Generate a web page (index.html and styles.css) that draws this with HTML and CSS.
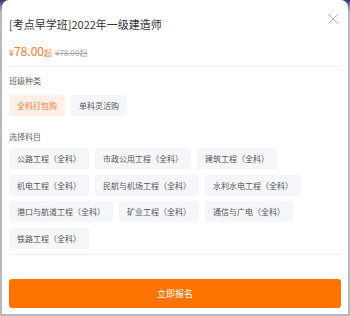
FILE: index.html
```html
<!DOCTYPE html>
<html lang="zh-CN">

<head>
    <meta charset="UTF-8">
    <meta name="viewport" content="width=device-width, initial-scale=1.0">
    <title>选择班级</title>
    <link rel="stylesheet" href="styles.css">
</head>

<body>
    <div class="modal">
        <div class="close">
            <svg width="10" height="10" viewBox="0 0 10 10">
                <path d="M0.5 0.5 L9.5 9.5 M9.5 0.5 L0.5 9.5" stroke="#b5b5b5" stroke-width="1" fill="none" />
            </svg>
        </div>

        <div class="head">
            <div class="title">[考点早学班]2022年一级建造师</div>
            <div class="price">
                <span class="yen">¥</span><span class="num">78.00</span><span class="qi">起</span><span class="old">¥78.00起</span>
            </div>
        </div>

        <div class="label first">班级种类</div>
        <div class="options">
            <span class="opt active">全科打包购</span>
            <span class="opt">单科灵活购</span>
        </div>

        <div class="label second">选择科目</div>
        <div class="options subjects">
            <span class="opt">公路工程（全科）</span>
            <span class="opt">市政公用工程（全科）</span>
            <span class="opt">建筑工程（全科）</span>
            <span class="opt">机电工程（全科）</span>
            <span class="opt">民航与机场工程（全科）</span>
            <span class="opt">水利水电工程（全科）</span>
            <span class="opt">港口与航道工程（全科）</span>
            <span class="opt">矿业工程（全科）</span>
            <span class="opt">通信与广电（全科）</span>
            <span class="opt">铁路工程（全科）</span>
        </div>

        <div class="footer">
            <button class="submit">立即报名</button>
        </div>
    </div>
</body>
</html>
```

FILE: styles.css
```css
body {
    margin: 0;
    height: 316px;
    overflow: hidden;
    background: linear-gradient(to bottom, #33337a 0, #7c7ca8 6px, #b9b9b9 12px);
    font-family: "Noto Sans CJK SC", "Noto Sans", sans-serif;
}

.modal {
    position: relative;
    box-sizing: border-box;
    height: 314px;
    margin: 0 2px;
    padding: 0 7px;
    background-color: #fff;
    border-radius: 7px 7px 0 0;
}

.close {
    position: absolute;
    top: 14px;
    right: 10px;
    width: 10px;
    height: 10px;
    line-height: 0;
}

.head {
    padding: 17px 0 10px;
    border-bottom: 1px solid #f2f2f2;
}

.title {
    font-size: 11px;
    line-height: 15px;
    color: #333;
}

.price {
    margin-top: 10px;
    height: 14px;
    line-height: 14px;
    color: #ff7a2e;
}

.yen {
    font-size: 9px;
}

.num {
    font-size: 12px;
}

.qi {
    font-size: 8px;
}

.old {
    margin-left: 3px;
    font-size: 8px;
    color: #a8a8a8;
    text-decoration: line-through;
}

.label {
    font-size: 8px;
    line-height: 12px;
    color: #666;
}

.label.first {
    margin-top: 8px;
}

.label.second {
    margin-top: 14.5px;
}

.options {
    display: flex;
    flex-wrap: wrap;
    gap: 5.5px 6px;
    margin-top: 8px;
}

.subjects {
    margin-top: 5.5px;
}

.opt {
    height: 21px;
    padding: 0 8px;
    font-size: 8px;
    line-height: 21px;
    color: #555;
    background-color: #f5f6f9;
    border-radius: 2px;
}

.opt.active {
    color: #ff7a3d;
    background-color: #fff0e7;
}

.footer {
    margin-top: 5px;
    padding-top: 24px;
    border-top: 1px solid #f2f2f2;
}

.submit {
    display: block;
    width: 100%;
    height: 29px;
    border: none;
    border-radius: 3px;
    background-color: #ff7400;
    color: #fff;
    font-family: inherit;
    font-size: 9px;
}
```
